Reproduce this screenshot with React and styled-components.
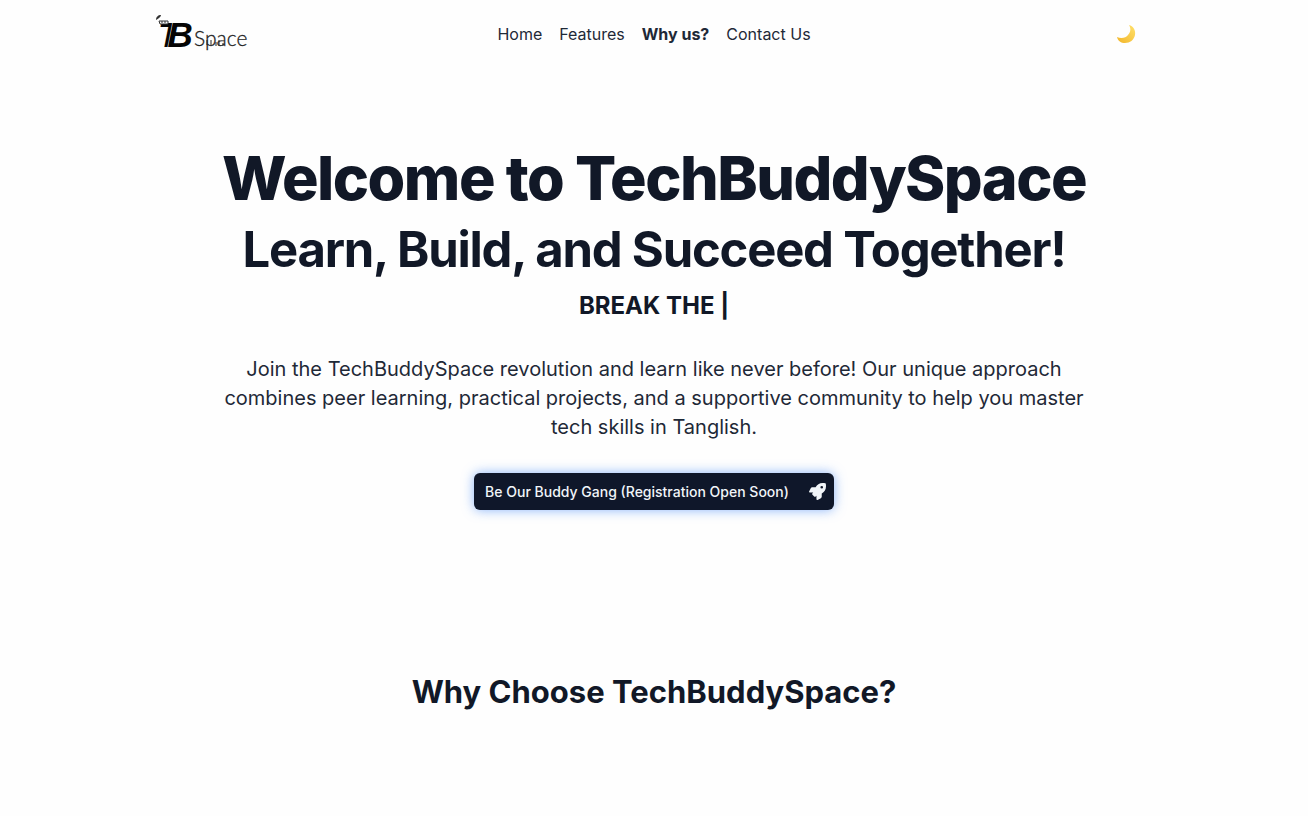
import React from "react";
import styled, { createGlobalStyle } from "styled-components";
import { FaRocket } from "react-icons/fa";

const GlobalStyle = createGlobalStyle`
  * { box-sizing: border-box; }
  body {
    margin: 0;
    background: #fefefe;
    color: #111827;
    font-family: Inter, "Liberation Sans", sans-serif;
  }
  h1, h2, p { margin: 0; }
`;

const Header = styled.header`
  display: grid;
  grid-template-columns: 1fr auto 1fr;
  align-items: center;
  max-width: 1000px;
  height: 67px;
  margin: 0 auto;
`;

const LogoLink = styled.a`
  justify-self: start;
  height: 44px;
`;

const Nav = styled.nav`
  display: flex;
  gap: 17px;
`;

const NavLink = styled.a`
  color: #1f2937;
  font-size: 16px;
  line-height: 24px;
  font-weight: ${(p) => (p.$active ? 700 : 400)};
  text-decoration: none;
`;

const ThemeButton = styled.button`
  justify-self: end;
  display: flex;
  margin-right: 18px;
  padding: 0;
  border: 0;
  background: none;
  cursor: pointer;
`;

const Hero = styled.section`
  display: flex;
  flex-direction: column;
  align-items: center;
  max-width: 912px;
  margin: 0 auto;
  padding: 80px 16px 0;
  text-align: center;
`;

const Title = styled.h1`
  font-size: 61px;
  line-height: 62px;
  font-weight: 800;
  letter-spacing: -0.025em;
  white-space: nowrap;
`;

const Subtitle = styled.p`
  margin-top: 10px;
  font-size: 49px;
  line-height: 62px;
  font-weight: 700;
  letter-spacing: -0.025em;
  white-space: nowrap;
`;

const Typed = styled.p`
  margin-top: 8px;
  font-size: 24px;
  line-height: 34px;
  font-weight: 700;
`;

const Lead = styled.p`
  margin-top: 32px;
  color: #1f2937;
  font-size: 20px;
  line-height: 29px;
`;

const CtaButton = styled.button`
  display: flex;
  align-items: center;
  gap: 20px;
  height: 37px;
  margin-top: 31px;
  padding: 0 8px 0 11px;
  border: 0;
  border-radius: 6px;
  background: #0f172a;
  color: #f1f5f9;
  font: 500 14px/20px Inter, "Liberation Sans", sans-serif;
  white-space: nowrap;
  box-shadow: 0 0 12px rgba(59, 130, 246, 0.6);
  cursor: pointer;
`;

const Why = styled.section`
  padding: 162px 16px 80px;
  text-align: center;
`;

const WhyTitle = styled.h2`
  font-size: 31px;
  line-height: 40px;
  font-weight: 700;
`;

function Logo() {
  return (
    <svg width="96" height="44" viewBox="0 0 96 44" role="img" aria-label="TechBuddySpace">
      <text
        x="4"
        y="35"
        fill="#050505"
        fontFamily="'Liberation Sans', sans-serif"
        fontWeight="700"
        fontStyle="italic"
        fontSize="35"
      >
        T<tspan dx="-12" stroke="#fefefe" strokeWidth="1" paintOrder="stroke">B</tspan>
      </text>
      <path d="M2 8C2 5 4 3 7 3C7 5 5 6 2 8Z" fill="#333" />
      <path d="M5 9h9v3H6z" fill="#fefefe" stroke="#333" strokeWidth="1" />
      <path d="M7 10h2M10 10h2" stroke="#333" strokeWidth="1" />
      <text x="40" y="34" fill="#222" stroke="#222" strokeWidth="0.3" fontFamily="Lato, sans-serif" fontWeight="300" fontSize="21">Space</text>
      <path d="M53 28v5M57 28v5M62 30v4M65 28v6M69 31v3" stroke="#222" strokeWidth="1" />
    </svg>
  );
}

function Moon() {
  return (
    <svg width="20" height="20" viewBox="0 0 20 20" aria-hidden="true">
      <defs>
        <linearGradient id="moon" x1="0" y1="1" x2="1" y2="0">
          <stop offset="0" stopColor="#f2b529" />
          <stop offset="1" stopColor="#ffe16b" />
        </linearGradient>
      </defs>
      <path d="M13 1C17 2 20 6 19 11C18 16 14 19 9 19C5 19 2 17 1 13C5 15 10 14 12 11C15 8 15 4 13 1Z" fill="url(#moon)" />
    </svg>
  );
}

const links = [
  { label: "Home", href: "#home" },
  { label: "Features", href: "#features" },
  { label: "Why us?", href: "#why", active: true },
  { label: "Contact Us", href: "#contact" },
];

export default function App() {
  return (
    <>
      <GlobalStyle />
      <Header>
        <LogoLink href="#home"><Logo /></LogoLink>
        <Nav>
          {links.map((l) => (
            <NavLink key={l.label} href={l.href} $active={l.active}>{l.label}</NavLink>
          ))}
        </Nav>
        <ThemeButton type="button" aria-label="Toggle dark mode"><Moon /></ThemeButton>
      </Header>
      <main>
        <Hero id="home">
          <Title>Welcome to TechBuddySpace</Title>
          <Subtitle>Learn, Build, and Succeed Together!</Subtitle>
          <Typed>BREAK THE |</Typed>
          <Lead>
            Join the TechBuddySpace revolution and learn like never before! Our unique approach
            combines peer learning, practical projects, and a supportive community to help you
            master tech skills in Tanglish.
          </Lead>
          <CtaButton type="button">
            Be Our Buddy Gang (Registration Open Soon)
            <FaRocket size={17} aria-hidden="true" />
          </CtaButton>
        </Hero>
        <Why id="why">
          <WhyTitle>Why Choose TechBuddySpace?</WhyTitle>
        </Why>
      </main>
    </>
  );
}
